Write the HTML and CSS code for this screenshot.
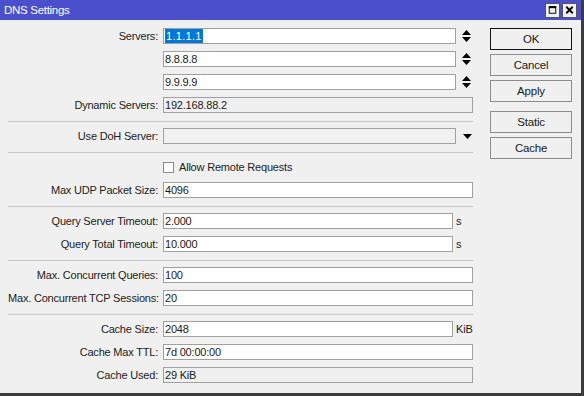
FILE: index.html
```html
<!DOCTYPE html>
<html>
<head>
<meta charset="utf-8">
<link rel="stylesheet" href="styles.css">
</head>
<body>
<div class="window">
  <div class="titlebar">
    <span class="title">DNS Settings</span>
    <div class="tbtns">
      <span class="tbtn"><svg width="14" height="14" viewBox="0 0 14 14"><rect x="3.5" y="3.5" width="7" height="7" fill="none" stroke="#000" stroke-width="1"/><rect x="3" y="3" width="8" height="2" fill="#000"/></svg></span>
      <span class="tbtn"><svg width="14" height="14" viewBox="0 0 14 14"><path d="M3.5 3.5 L10.5 10.5 M10.5 3.5 L3.5 10.5" stroke="#000" stroke-width="2"/></svg></span>
    </div>
  </div>
  <div class="content">
    <div class="form">
      <div class="row">
        <label class="lbl">Servers:</label>
        <div class="field short"><span class="sel">1.1.1.1</span></div>
        <span class="spin"><svg width="9" height="12" viewBox="0 0 9 12"><path d="M4.5 0 L9 5 L0 5 Z M0 7 L9 7 L4.5 12 Z" fill="#000"/></svg></span>
      </div>
      <div class="row">
        <label class="lbl"></label>
        <div class="field short">8.8.8.8</div>
        <span class="spin"><svg width="9" height="12" viewBox="0 0 9 12"><path d="M4.5 0 L9 5 L0 5 Z M0 7 L9 7 L4.5 12 Z" fill="#000"/></svg></span>
      </div>
      <div class="row">
        <label class="lbl"></label>
        <div class="field short">9.9.9.9</div>
        <span class="spin"><svg width="9" height="12" viewBox="0 0 9 12"><path d="M4.5 0 L9 5 L0 5 Z M0 7 L9 7 L4.5 12 Z" fill="#000"/></svg></span>
      </div>
      <div class="row">
        <label class="lbl">Dynamic Servers:</label>
        <div class="field full ro">192.168.88.2</div>
      </div>
      <div class="sep"></div>
      <div class="row">
        <label class="lbl">Use DoH Server:</label>
        <div class="field short ro"></div>
        <span class="drop"><svg width="9" height="5" viewBox="0 0 9 5"><path d="M0 0 L9 0 L4.5 5 Z" fill="#000"/></svg></span>
      </div>
      <div class="sep"></div>
      <div class="row">
        <label class="lbl"></label>
        <span class="check"></span>
        <span class="checktext">Allow Remote Requests</span>
      </div>
      <div class="row">
        <label class="lbl">Max UDP Packet Size:</label>
        <div class="field full">4096</div>
      </div>
      <div class="sep"></div>
      <div class="row">
        <label class="lbl">Query Server Timeout:</label>
        <div class="field unit">2.000</div>
        <span class="u">s</span>
      </div>
      <div class="row">
        <label class="lbl">Query Total Timeout:</label>
        <div class="field unit">10.000</div>
        <span class="u">s</span>
      </div>
      <div class="sep"></div>
      <div class="row">
        <label class="lbl">Max. Concurrent Queries:</label>
        <div class="field full">100</div>
      </div>
      <div class="row">
        <label class="lbl">Max. Concurrent TCP Sessions:</label>
        <div class="field full">20</div>
      </div>
      <div class="sep"></div>
      <div class="row">
        <label class="lbl">Cache Size:</label>
        <div class="field unit">2048</div>
        <span class="u">KiB</span>
      </div>
      <div class="row">
        <label class="lbl">Cache Max TTL:</label>
        <div class="field full">7d 00:00:00</div>
      </div>
      <div class="row">
        <label class="lbl">Cache Used:</label>
        <div class="field full ro">29 KiB</div>
      </div>
    </div>
    <div class="buttons">
      <div class="btngroup">
        <button class="btn default">OK</button>
        <button class="btn">Cancel</button>
        <button class="btn">Apply</button>
      </div>
      <div class="btngroup">
        <button class="btn">Static</button>
        <button class="btn">Cache</button>
      </div>
    </div>
  </div>
</div>
</body>
</html>
```
FILE: styles.css
```css
* { box-sizing: border-box; }
html, body { margin: 0; padding: 0; }
body {
  width: 584px;
  height: 396px;
  overflow: hidden;
  background: #f0f0f0;
  font-family: "Liberation Sans", Arial, sans-serif;
  font-size: 11px;
  letter-spacing: -0.2px;
  color: #1a1a1a;
}
.window {
  width: 584px;
  height: 396px;
  background: #f0f0f0;
  border-right: 3px solid #3c3c3c;
  border-bottom: 3px solid #3c3c3c;
  display: flex;
  flex-direction: column;
}
.titlebar {
  height: 20px;
  background: #4b4fcc;
  display: flex;
  align-items: center;
  padding-left: 4px;
  padding-right: 4px;
}
.title {
  color: #fff;
  font-size: 11.5px;
  letter-spacing: -0.3px;
  flex: 1;
}
.tbtns { display: flex; gap: 2px; }
.tbtn {
  width: 15px;
  height: 15px;
  background: #f0f0f0;
  border: 1px solid #555;
  display: flex;
  align-items: center;
  justify-content: center;
}
.tbtn svg { display: block; }
.content {
  display: flex;
  padding: 8px 0 0 8px;
}
.form {
  width: 465px;
  display: flex;
  flex-direction: column;
  gap: 7px;
}
.row {
  height: 16px;
  display: flex;
  align-items: center;
}
.lbl {
  width: 152px;
  text-align: right;
  padding-right: 2px;
  flex: none;
  white-space: nowrap;
  color: #222;
}
.field {
  height: 16px;
  background: #fff;
  border: 1px solid #a0a0a0;
  padding-left: 1px;
  line-height: 14px;
  margin-left: 3px;
  white-space: nowrap;
  flex: none;
}
.field.short { width: 293px; }
.field.full { width: 310px; }
.field.unit { width: 290px; }
.field.ro { background: #f0f0f0; }
.sel {
  display: inline-block;
  background: #0078d7;
  color: #fff;
  padding: 0 1px;
  letter-spacing: 0.3px;
  line-height: 14px;
  vertical-align: top;
}
.spin { margin-left: 6px; display: flex; }
.drop { margin-left: 7px; display: flex; }
.u { margin-left: 3px; color: #1a1a1a; }
.check {
  width: 11px;
  height: 11px;
  border: 1px solid #8a8a8a;
  background: #fff;
  margin-left: 3px;
  flex: none;
}
.checktext { margin-left: 5px; color: #222; }
.sep {
  height: 1px;
  background: #c8c8c8;
  margin: 1px 0 -1px 0;
}
.buttons {
  margin-left: 17px;
  width: 82px;
  display: flex;
  flex-direction: column;
  gap: 9px;
}
.btngroup { display: flex; flex-direction: column; gap: 4px; }
.btn {
  width: 82px;
  height: 22px;
  background: #f0f0f0;
  border: 1px solid #8c8c8c;
  font-family: "Liberation Sans", Arial, sans-serif;
  font-size: 11.5px;
  letter-spacing: -0.2px;
  color: #1a1a1a;
  padding: 0;
  margin: 0;
}
.btn.default { border: 1px solid #111; }
```
